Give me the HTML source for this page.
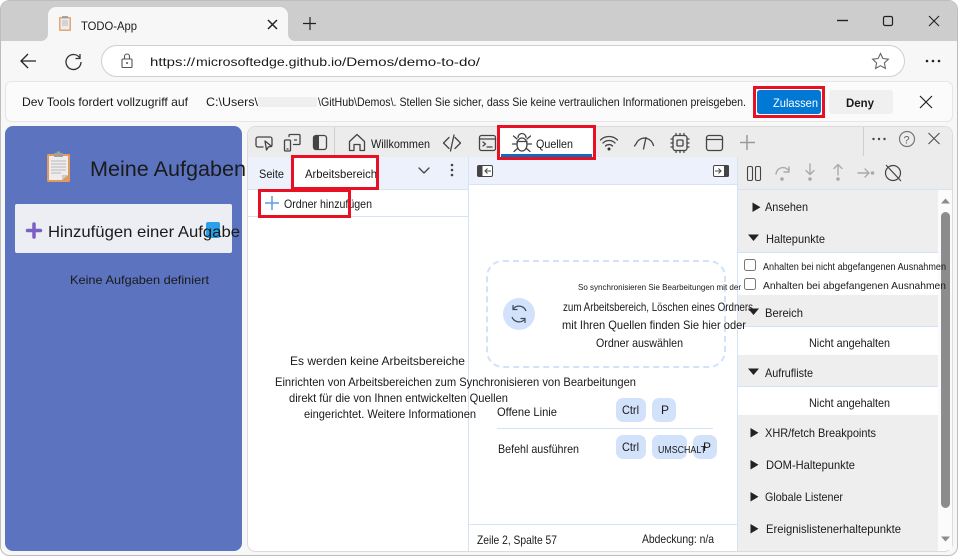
<!DOCTYPE html>
<html><head><meta charset="utf-8"><title>TODO-App</title>
<style>
html,body{margin:0;padding:0;background:#fff;width:958px;height:556px;overflow:hidden}
svg{display:block}
text{font-family:"Liberation Sans",sans-serif;font-size:12px;fill:#1a1a1a;white-space:pre}
.i{fill:none;stroke:#444;stroke-width:1.3;stroke-linecap:round;stroke-linejoin:round}
.g{fill:none;stroke:#aaa;stroke-width:1.4;stroke-linecap:round;stroke-linejoin:round}
.r{fill:none;stroke:#e81123;stroke-width:3}
.k{fill:#d3e2fb}
</style></head><body>
<svg width="958" height="556" viewBox="0 0 958 556" xmlns="http://www.w3.org/2000/svg">
<rect width="958" height="556" fill="#fff"/>
<rect x="0.5" y="0.5" width="957" height="555" rx="9" fill="#f7f7f7" stroke="#bdbdbd"/>
<path d="M1 41V9a8 8 0 0 1 8-8H949a8 8 0 0 1 8 8V41Z" fill="#cdcdcd"/>
<path d="M41 41a7 7 0 0 0 7-7V15a8 8 0 0 1 8-8H280a8 8 0 0 1 8 8V34a7 7 0 0 0 7 7Z" fill="#f7f7f7"/>
<!-- tab icon -->
<rect x="59" y="17" width="12" height="14" rx="1" fill="#e8a672"/>
<rect x="60.5" y="18.5" width="9" height="11" fill="#ecebee"/>
<path d="M62 21h6M62 23h6M62 25h6" stroke="#bbb" stroke-width="1"/>
<rect x="62" y="16" width="6" height="2.5" fill="#a9a29a"/>
<text x="81" y="30" font-size="13" textLength="56" lengthAdjust="spacingAndGlyphs">TODO-App</text>
<path d="M268 20l9 9M277 20l-9 9" stroke="#222" stroke-width="1.5"/>
<path d="M310 17v13M303 23.500h13" stroke="#222" stroke-width="1.2"/>
<path d="M837 20.500h11" stroke="#222" stroke-width="1.4"/>
<rect x="883.500" y="16.500" width="9" height="9" rx="1.500" fill="none" stroke="#222" stroke-width="1.200"/>
<path d="M929 16l10 10M939 16l-10 10" stroke="#222" stroke-width="1.100"/>
<!-- nav -->
<path d="M21 61h15M28 54l-7 7 7 7" fill="none" stroke="#222" stroke-width="1.300"/>
<path d="M79.500 57.500a7.500 7.500 0 1 0 1.500 4.500M80 54v4.500h-4.500" fill="none" stroke="#333" stroke-width="1.300"/>
<rect x="101.500" y="45.500" width="803" height="31" rx="15.500" fill="#fff" stroke="#cfcfcf"/>
<rect x="122" y="59" width="10" height="8.500" rx="1" fill="none" stroke="#555" stroke-width="1.100"/>
<path d="M124.500 59v-2.500a2.500 2.500 0 0 1 5 0V59" fill="none" stroke="#555" stroke-width="1.100"/>
<circle cx="127" cy="63" r="1" fill="#555"/>
<text x="150" y="66" font-size="15" fill="#767676" textLength="45" lengthAdjust="spacingAndGlyphs">https://</text>
<text x="196" y="66" font-size="15" textLength="146" lengthAdjust="spacingAndGlyphs">microsoftedge.github.io</text>
<text x="342" y="66" font-size="15" fill="#767676" textLength="138" lengthAdjust="spacingAndGlyphs">/Demos/demo-to-do/</text>
<path d="M880.500 53.500l2.400 5 5.500.7-4 3.800 1 5.400-4.900-2.700-4.900 2.700 1-5.400-4-3.800 5.500-.7z" fill="none" stroke="#666" stroke-width="1.100"/>
<circle cx="927" cy="61" r="1.300" fill="#222"/><circle cx="933" cy="61" r="1.300" fill="#222"/><circle cx="939" cy="61" r="1.300" fill="#222"/>
<!-- infobar -->
<rect x="5.500" y="81.500" width="947" height="40" rx="6" fill="#fbfbfb" stroke="#e6e6e6"/>
<text x="22" y="106" font-size="12" textLength="166" lengthAdjust="spacingAndGlyphs">Dev Tools fordert vollzugriff auf</text>
<text x="206" y="106" font-size="12" textLength="52" lengthAdjust="spacingAndGlyphs">C:\Users\</text>
<rect x="258" y="97" width="59" height="10" fill="#efefef"/>
<text x="318" y="106" font-size="12" textLength="428" lengthAdjust="spacingAndGlyphs">\GitHub\Demos\. Stellen Sie sicher, dass Sie keine vertraulichen Informationen preisgeben.</text>
<rect x="757" y="90" width="64" height="24" rx="3" fill="#0078d4"/>
<text x="773" y="107" font-size="12" fill="#fff" style="fill:#fff" textLength="45" lengthAdjust="spacingAndGlyphs">Zulassen</text>
<rect x="754.500" y="87.500" width="69" height="29" class="r"/>
<rect x="829" y="90" width="64" height="24" rx="3" fill="#f0f0f0"/>
<text x="846" y="107" font-size="12" font-weight="bold" textLength="28" lengthAdjust="spacingAndGlyphs">Deny</text>
<path d="M920 96l12 12M932 96l-12 12" stroke="#222" stroke-width="1.200"/>
<!-- app panel -->
<rect x="5" y="126" width="237" height="425" rx="8" fill="#5c73bf"/>
<rect x="47" y="154" width="23" height="28" rx="1.500" fill="#e09a5b"/>
<path d="M49 156h19v19l-6 5H49z" fill="#efecee"/>
<path d="M62 180l6-5h-6z" fill="#cfc9c9"/>
<path d="M51 161h15M51 164h15M51 167h15M51 170h15M51 173h10" stroke="#b9b9b9" stroke-width="1"/>
<rect x="54" y="153" width="9" height="4" fill="#a39e96"/><circle cx="58.500" cy="153" r="1.800" fill="#a39e96"/>
<text x="90" y="176" font-size="21" style="font-size:21px" fill="#000" textLength="156" lengthAdjust="spacingAndGlyphs">Meine Aufgaben</text>
<rect x="15" y="204" width="217" height="49" rx="2" fill="#eceef3"/>
<path d="M34 224v13M27.500 230.500h13" stroke="#7a5fc4" stroke-width="3.500" stroke-linecap="round"/>
<rect x="206" y="222" width="14" height="16" rx="2" fill="#2aa0e8"/>
<text x="48" y="237" style="font-size:16px" textLength="192" lengthAdjust="spacingAndGlyphs">Hinzufügen einer Aufgabe</text>
<text x="70" y="284" textLength="139" lengthAdjust="spacingAndGlyphs">Keine Aufgaben definiert</text>
<!-- devtools -->
<rect x="247.500" y="126.500" width="705" height="425" rx="8" fill="#fff" stroke="#dcdcdc"/>
<path d="M248 157V134a7 7 0 0 1 7-7H945a7 7 0 0 1 7 7V157Z" fill="#ececec"/>
<rect x="248" y="157" width="220" height="32" fill="#ecf1fb"/>
<rect x="468" y="157" width="270" height="27" fill="#ecf1fb"/>
<path d="M468 184.500h270M248 189.500h220M248 216.500h220M468.500 157v394M737.500 157v394" stroke="#d8e2f5" stroke-width="1"/>
<rect x="738" y="157" width="214" height="32" fill="#ececec"/>
<path d="M738 189.500h214" stroke="#d8e2f5"/>
<path d="M738 190H938V551H738Z" fill="#eeeeee"/>
<rect x="738" y="253" width="200" height="42" fill="#fff"/>
<rect x="738" y="327" width="200" height="28" fill="#fff"/>
<rect x="738" y="387" width="200" height="28" fill="#fff"/>
<path d="M738 252.500h200M738 326.500h200M738 386.500h200" stroke="#d3e2fb"/>
<rect x="938" y="190" width="14" height="360" fill="#fbfbfb"/>
<rect x="941" y="212" width="9" height="296" rx="4.500" fill="#8c8c8c"/>
<path d="M941 203.500l4.500-5 4.500 5z" fill="#8c8c8c"/><path d="M941 536.500l4.500 5 4.500-5z" fill="#8c8c8c"/>
<!-- toolbar icons -->
<path d="M263 147h-5a2 2 0 0 1-2-2v-6a2 2 0 0 1 2-2h12a2 2 0 0 1 2 2v6a2 2 0 0 1-1 1.700" class="i"/>
<path d="M265 141l1.500 9 1.800-3 3.200-.7z" class="i"/>
<path d="M289 136.500v-1a1 1 0 0 1 1-1h9a1 1 0 0 1 1 1v8a1 1 0 0 1-1 1h-5.500M294.500 140h2" class="i"/>
<rect x="284.500" y="140" width="6" height="11" rx="1" class="i"/><path d="M287 149h1" class="i"/>
<rect x="313.500" y="135.500" width="13" height="14" rx="2.500" class="i"/>
<path d="M316 135.500h3v14h-3a2.500 2.500 0 0 1-2.500-2.500v-9a2.500 2.500 0 0 1 2.500-2.500z" fill="#444"/>
<path d="M334.500 127v28" stroke="#cfcfcf"/>
<path d="M349.500 141.500l7.500-7 7.500 7v9h-4.500v-6h-6v6h-4.500z" class="i" stroke-width="1.500"/>
<text x="371" y="148" textLength="59" lengthAdjust="spacingAndGlyphs">Willkommen</text>
<path d="M449 137.500l-5.500 5.500 5.500 5.500M455 137.500l5.500 5.500-5.500 5.500M454 135l-3.500 16" class="i"/>
<rect x="479.500" y="135.500" width="16" height="15" rx="2" class="i"/><path d="M479.500 139h16" class="i"/><path d="M483 142l2.500 2-2.500 2M487 147h5" class="i"/>
<rect x="498" y="127" width="97" height="30" fill="#fff"/>
<rect x="501" y="154" width="91" height="3" fill="#0f6cbd"/>
<rect x="498.500" y="126.500" width="96" height="32" class="r"/>
<ellipse cx="522" cy="144.500" rx="5" ry="6.500" class="i"/>
<path d="M518 137.500a4 4 0 0 1 8 0M517 139l-3.500-3M527 139l3.500-3M517 144h-4.500M527 144h4.500M517.500 148.500l-3.500 3M526.500 148.500l3.500 3M517 141.500h10" class="i"/>
<text x="536" y="148" textLength="37" lengthAdjust="spacingAndGlyphs">Quellen</text>
<path d="M600.500 140a12 12 0 0 1 17 0M603 143a8.500 8.500 0 0 1 12 0M605.500 146a5 5 0 0 1 7 0" class="i" stroke-width="1.500"/><circle cx="609" cy="149" r="1.500" fill="#333"/>
<path d="M636 144l-1.500 2M636 144a9 9 0 0 1 16.500-1l1 2.500" class="i"/><path d="M646 137.500l-2.500 11.500" class="i" stroke-width="2.200"/>
<rect x="673" y="135.500" width="14" height="15" rx="2.500" class="i"/><rect x="677" y="140" width="6" height="6" rx="1" class="i"/>
<path d="M676 133.500v2M680 133.500v2M684 133.500v2M676 150.500v2M680 150.500v2M684 150.500v2M671 139h2M671 143h2M671 147h2M687 139h2M687 143h2M687 147h2" class="i" stroke-width="1"/>
<rect x="706.500" y="135.500" width="16" height="15" rx="2.500" class="i" stroke-width="1.500"/><path d="M706.500 139.500h16" class="i"/>
<path d="M747 135v15M740 142.500h15" stroke="#999" stroke-width="1.500"/>
<path d="M863.500 127v29" stroke="#cfcfcf"/>
<circle cx="873.500" cy="139" r="1.200" fill="#444"/><circle cx="879" cy="139" r="1.200" fill="#444"/><circle cx="884.500" cy="139" r="1.200" fill="#444"/>
<circle cx="907" cy="139" r="7.500" fill="none" stroke="#777" stroke-width="1.200"/>
<text x="903.500" y="143.500" style="font-size:11px;fill:#666">?</text>
<path d="M928.500 133l11 11M939.500 133l-11 11" stroke="#555" stroke-width="1.200"/>
<!-- left tabs -->
<text x="259" y="178" textLength="25" lengthAdjust="spacingAndGlyphs">Seite</text>
<rect x="293" y="157" width="84" height="32" fill="#fff"/>
<text x="305" y="178" textLength="72" lengthAdjust="spacingAndGlyphs">Arbeitsbereich</text>
<rect x="292.500" y="156.500" width="85" height="32" class="r"/>
<path d="M419 168l5 5 5-5" class="i" fill="none"/>
<circle cx="452" cy="165" r="1.300" fill="#444"/><circle cx="452" cy="170" r="1.300" fill="#444"/><circle cx="452" cy="175" r="1.300" fill="#444"/>
<path d="M272 196v14M265 203h14" stroke="#5f9be0" stroke-width="1.500"/>
<text x="284" y="208" textLength="88" lengthAdjust="spacingAndGlyphs">Ordner hinzufügen</text>
<rect x="259.500" y="190.500" width="90" height="26" class="r"/>
<!-- center tabs -->
<rect x="477.500" y="165.500" width="15" height="11" rx="1.500" fill="#fff" stroke="#444"/>
<rect x="477.500" y="165.500" width="5" height="11" fill="#444"/><path d="M491 171h-6M487.500 168.500l-2.500 2.500 2.500 2.500" fill="none" stroke="#444"/>
<rect x="713.500" y="165.500" width="15" height="11" rx="1.500" fill="#fff" stroke="#444"/>
<rect x="724" y="165.500" width="5" height="11" fill="#444"/><path d="M715 171h6M718.500 168.500l2.500 2.500-2.500 2.500" fill="none" stroke="#444"/>
<!-- workspace text -->
<text x="290" y="365" textLength="175" lengthAdjust="spacingAndGlyphs">Es werden keine Arbeitsbereiche</text>
<text x="275" y="386" textLength="361" lengthAdjust="spacingAndGlyphs">Einrichten von Arbeitsbereichen zum Synchronisieren von Bearbeitungen</text>
<text x="289" y="402" textLength="219" lengthAdjust="spacingAndGlyphs">direkt für die von Ihnen entwickelten Quellen</text>
<text x="304" y="418" textLength="172" lengthAdjust="spacingAndGlyphs">eingerichtet. Weitere Informationen</text>
<rect x="487" y="261" width="238" height="106" rx="16" fill="none" stroke="#d3e2fb" stroke-width="2" stroke-dasharray="6 4"/>
<circle cx="519" cy="314" r="16" fill="#d3e2fb"/>
<path d="M526 311a7.500 7.500 0 0 0-12.500-2.500M512 317a7.500 7.500 0 0 0 12.500 2.500" fill="none" stroke="#3c4a5a" stroke-width="1.200"/>
<path d="M513 305v4.500h4.500M525 323v-4.500h-4.500" fill="none" stroke="#3c4a5a" stroke-width="1.200"/>
<text x="578" y="290" style="font-size:8.500px" textLength="163" lengthAdjust="spacingAndGlyphs">So synchronisieren Sie Bearbeitungen mit der</text>
<text x="563" y="311" textLength="190" lengthAdjust="spacingAndGlyphs">zum Arbeitsbereich, Löschen eines Ordners</text>
<text x="562" y="329" textLength="184" lengthAdjust="spacingAndGlyphs">mit Ihren Quellen finden Sie hier oder</text>
<text x="596" y="347" textLength="87" lengthAdjust="spacingAndGlyphs">Ordner auswählen</text>
<text x="497" y="416" textLength="60" lengthAdjust="spacingAndGlyphs">Offene Linie</text>
<text x="498" y="453" textLength="81" lengthAdjust="spacingAndGlyphs">Befehl ausführen</text>
<path d="M497 428.500h216" stroke="#d3e2f5"/>
<rect x="616" y="398" width="30" height="24" rx="7" class="k"/><rect x="652" y="398" width="24" height="24" rx="7" class="k"/>
<rect x="616" y="435" width="30" height="24" rx="7" class="k"/><rect x="652" y="435" width="35" height="24" rx="7" class="k"/><rect x="693" y="435" width="24" height="24" rx="7" class="k"/>
<text x="622" y="414" textLength="17" lengthAdjust="spacingAndGlyphs">Ctrl</text>
<text x="661" y="414">P</text>
<text x="622" y="451" textLength="17" lengthAdjust="spacingAndGlyphs">Ctrl</text>
<text x="658" y="453" style="font-size:10px" textLength="48" lengthAdjust="spacingAndGlyphs">UMSCHALT</text>
<text x="703" y="451">P</text>
<path d="M469 524.500h268" stroke="#d8e2f5"/>
<text x="477" y="544" textLength="80" lengthAdjust="spacingAndGlyphs">Zeile 2, Spalte 57</text>
<text x="642" y="543" textLength="72" lengthAdjust="spacingAndGlyphs">Abdeckung: n/a</text>
<!-- debug toolbar -->
<rect x="747.500" y="166.500" width="5" height="14" rx="1.500" fill="none" stroke="#444" stroke-width="1.100"/>
<rect x="755.500" y="166.500" width="5" height="14" rx="1.500" fill="none" stroke="#444" stroke-width="1.100"/>
<path d="M776 174a7 7 0 0 1 13-3M789 167v5h-5" class="g"/><circle cx="782" cy="179" r="1.800" fill="#aaa"/>
<path d="M810 164v10M806 170.500l4 4 4-4" class="g"/><circle cx="810" cy="179" r="1.800" fill="#aaa"/>
<path d="M838 175v-10M834 168.500l4-4 4 4" class="g"/><circle cx="838" cy="179" r="1.800" fill="#aaa"/>
<path d="M858 173h11M865 169l4 4-4 4" class="g"/><circle cx="872.500" cy="173" r="1.800" fill="#aaa"/>
<circle cx="893" cy="173" r="7.500" fill="none" stroke="#444" stroke-width="1.200"/><path d="M886 165l15 16" stroke="#444" stroke-width="1.200"/>
<!-- sidebar -->
<path d="M752.500 202.500v9.500l8-4.700z" fill="#222"/>
<text x="765" y="211" textLength="43" lengthAdjust="spacingAndGlyphs">Ansehen</text>
<path d="M748 234.500h11l-5.500 6.500z" fill="#222"/>
<text x="766" y="243" textLength="59" lengthAdjust="spacingAndGlyphs">Haltepunkte</text>
<rect x="744.500" y="259.500" width="11" height="11" rx="2" fill="#fff" stroke="#777"/>
<rect x="744.500" y="278.500" width="11" height="11" rx="2" fill="#fff" stroke="#777"/>
<text x="763" y="270" style="font-size:10px" textLength="183" lengthAdjust="spacingAndGlyphs">Anhalten bei nicht abgefangenen Ausnahmen</text>
<text x="763" y="289" style="font-size:10.500px" textLength="183" lengthAdjust="spacingAndGlyphs">Anhalten bei abgefangenen Ausnahmen</text>
<path d="M748 308.500h11l-5.500 6.500z" fill="#222"/>
<text x="765" y="317" textLength="38" lengthAdjust="spacingAndGlyphs">Bereich</text>
<text x="809" y="347" textLength="81" lengthAdjust="spacingAndGlyphs">Nicht angehalten</text>
<path d="M748 368.500h11l-5.500 6.500z" fill="#222"/>
<text x="765" y="377" textLength="48" lengthAdjust="spacingAndGlyphs">Aufrufliste</text>
<text x="809" y="407" textLength="81" lengthAdjust="spacingAndGlyphs">Nicht angehalten</text>
<path d="M750.500 428v9.500l8-4.700z" fill="#222"/>
<text x="765" y="437" textLength="111" lengthAdjust="spacingAndGlyphs">XHR/fetch Breakpoints</text>
<path d="M750.500 460v9.500l8-4.700z" fill="#222"/>
<text x="766" y="469" textLength="89" lengthAdjust="spacingAndGlyphs">DOM-Haltepunkte</text>
<path d="M750.500 492v9.500l8-4.700z" fill="#222"/>
<text x="765" y="501" textLength="78" lengthAdjust="spacingAndGlyphs">Globale Listener</text>
<path d="M750.500 524v9.500l8-4.700z" fill="#222"/>
<text x="766" y="533" textLength="135" lengthAdjust="spacingAndGlyphs">Ereignislistenerhaltepunkte</text>
</svg>
</body></html>
